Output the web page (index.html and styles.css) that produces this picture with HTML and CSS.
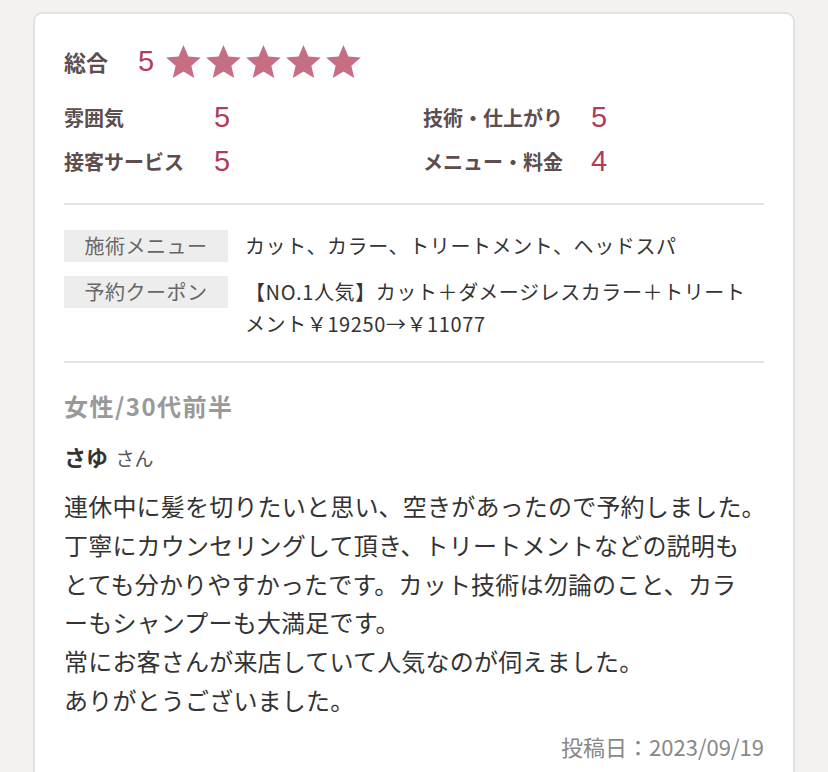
FILE: index.html
```html
<!DOCTYPE html>
<html lang="ja">
<head>
    <meta charset="UTF-8">
    <title>口コミ</title>
    <link rel="stylesheet" href="styles.css">
</head>
<body>
<div class="card">
    <div class="rating">
        <div class="total">
            <span class="total-label">総合</span>
            <span class="total-num">5</span>
            <span class="stars">
                <svg viewBox="2 2 20 19"><path d="M12 17.27L18.18 21l-1.64-7.03L22 9.24l-7.19-.61L12 2 9.19 8.63 2 9.24l5.46 4.73L5.82 21z"/></svg>
                <svg viewBox="2 2 20 19"><path d="M12 17.27L18.18 21l-1.64-7.03L22 9.24l-7.19-.61L12 2 9.19 8.63 2 9.24l5.46 4.73L5.82 21z"/></svg>
                <svg viewBox="2 2 20 19"><path d="M12 17.27L18.18 21l-1.64-7.03L22 9.24l-7.19-.61L12 2 9.19 8.63 2 9.24l5.46 4.73L5.82 21z"/></svg>
                <svg viewBox="2 2 20 19"><path d="M12 17.27L18.18 21l-1.64-7.03L22 9.24l-7.19-.61L12 2 9.19 8.63 2 9.24l5.46 4.73L5.82 21z"/></svg>
                <svg viewBox="2 2 20 19"><path d="M12 17.27L18.18 21l-1.64-7.03L22 9.24l-7.19-.61L12 2 9.19 8.63 2 9.24l5.46 4.73L5.82 21z"/></svg>
            </span>
        </div>
        <div class="scores">
            <div class="score"><span class="score-label">雰囲気</span><span class="score-num">5</span></div>
            <div class="score"><span class="score-label">技術・仕上がり</span><span class="score-num">5</span></div>
            <div class="score"><span class="score-label">接客サービス</span><span class="score-num">5</span></div>
            <div class="score"><span class="score-label">メニュー・料金</span><span class="score-num">4</span></div>
        </div>
    </div>

    <div class="menu">
        <div class="menu-row">
            <div class="menu-label">施術メニュー</div>
            <div class="menu-value">カット、カラー、トリートメント、ヘッドスパ</div>
        </div>
        <div class="menu-row">
            <div class="menu-label">予約クーポン</div>
            <div class="menu-value">【NO.1人気】カット＋ダメージレスカラー＋トリートメント￥19250→￥11077</div>
        </div>
    </div>

    <div class="review">
        <p class="reviewer">女性/30代前半</p>
        <p class="name"><strong>さゆ</strong> <span>さん</span></p>
        <p class="body">連休中に髪を切りたいと思い、空きがあったので予約しました。<br>丁寧にカウンセリングして頂き、トリートメントなどの説明も<br>とても分かりやすかったです。カット技術は勿論のこと、カラ<br>ーもシャンプーも大満足です。<br>常にお客さんが来店していて人気なのが伺えました。<br>ありがとうございました。</p>
        <p class="date">投稿日：2023/09/19</p>
    </div>
</div>
</body>
</html>
```

FILE: styles.css
```css
* {
    box-sizing: border-box;
}
body {
    margin: 0;
    background: #f3f2f0;
    font-family: "Noto Sans CJK JP", sans-serif;
    color: #333;
}
.card {
    width: 762px;
    margin: 12px 0 0 33px;
    padding: 29px 29px 40px;
    background: #fff;
    border: 2px solid #e2e2e2;
    border-radius: 9px;
}

/* rating */
.rating {
    padding-bottom: 24px;
    border-bottom: 2px solid #e2e2e2;
}
.total {
    display: flex;
    align-items: center;
    height: 36px;
}
.total-label {
    font-size: 22px;
    font-weight: 700;
    color: #5c4d4e;
    margin-right: 30px;
}
.total-num {
    font-family: "Liberation Sans", sans-serif;
    font-size: 29px;
    color: #b13b5b;
    margin-right: 12px;
}
.stars {
    display: flex;
    gap: 5px;
}
.stars svg {
    width: 35px;
    height: 33px;
    fill: #c66e83;
}
.scores {
    display: grid;
    grid-template-columns: 359px 1fr;
    row-gap: 8px;
    margin-top: 20px;
}
.score {
    display: flex;
    align-items: center;
    height: 36px;
}
.score-label {
    min-width: 122px;
    margin-right: 28px;
    font-size: 20px;
    font-weight: 700;
    color: #5c4d4e;
}
.score-num {
    font-family: "Liberation Sans", sans-serif;
    font-size: 29px;
    color: #b13b5b;
}

/* menu */
.menu {
    display: flex;
    flex-direction: column;
    gap: 14px;
    padding: 25px 0 21px;
    border-bottom: 2px solid #e2e2e2;
}
.menu-row {
    display: flex;
    gap: 17px;
}
.menu-label {
    flex: 0 0 164px;
    height: 32px;
    line-height: 32px;
    background: #ededed;
    text-align: center;
    font-size: 20px;
    letter-spacing: 0.5px;
    color: #666;
}
.menu-value {
    flex: 1;
    padding-right: 10px;
    font-size: 20px;
    line-height: 32px;
    letter-spacing: 0.6px;
    color: #333;
}

/* review */
.review p {
    margin: 0;
}
.reviewer {
    padding-top: 27px;
    font-size: 24px;
    line-height: 32px;
    font-weight: 700;
    letter-spacing: 1.5px;
    color: #999;
}
.name {
    margin-top: 18px !important;
    line-height: 32px;
}
.name strong {
    font-size: 22px;
    color: #333;
}
.name span {
    margin-left: 4px;
    font-size: 19px;
    color: #555;
}
.body {
    margin-top: 12px !important;
    margin-right: -6px !important;
    font-size: 24px;
    line-height: 38.8px;
    letter-spacing: 0.2px;
    color: #333;
}
.date {
    margin-top: 11px !important;
    text-align: right;
    font-size: 22px;
    line-height: 30px;
    color: #888;
}
```
